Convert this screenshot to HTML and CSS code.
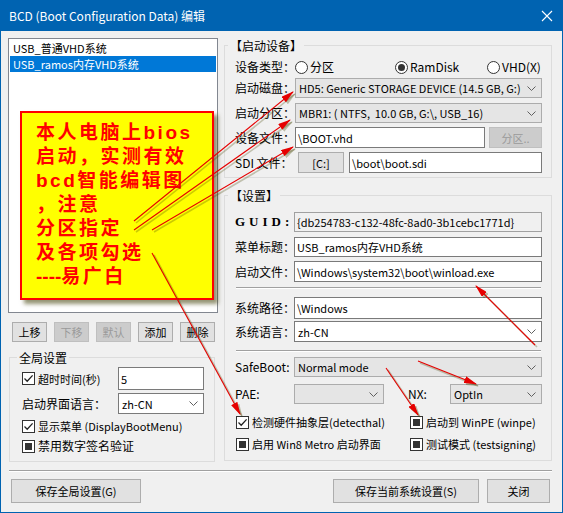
FILE: index.html
```html
<!DOCTYPE html>
<html lang="zh-CN">
<head>
<meta charset="utf-8">
<title>BCD 编辑</title>
<link rel="stylesheet" href="styles.css">
</head>
<body>
<div class="window">
  <div class="titlebar">
    <span class="title">BCD (Boot Configuration Data) 编辑</span>
    <svg class="close" width="12" height="12" viewBox="0 0 12 12"><path d="M1 1L11 11M11 1L1 11" stroke="#fff" stroke-width="1.1"/></svg>
  </div>
  <div class="content">
    <div class="main">
      <div class="left">
        <div class="listbox">
          <div class="item">USB_普通VHD系统</div>
          <div class="item selected">USB_ramos内存VHD系统</div>
        </div>
        <div class="btnrow">
          <div class="btn sm">上移</div>
          <div class="btn sm disabled">下移</div>
          <div class="btn sm disabled">默认</div>
          <div class="btn sm">添加</div>
          <div class="btn sm">删除</div>
        </div>
        <div class="group global">
          <div class="legend gl">全局设置</div>
          <div class="grow r1">
            <div class="chk"><span class="cb"><svg viewBox="0 0 11 11"><path d="M1.5 5.5L4.2 8.2L9.6 2.4" fill="none" stroke="#222" stroke-width="1.3"/></svg></span>超时时间(秒)</div>
            <div class="input gfield">5</div>
          </div>
          <div class="grow r2">
            <div class="glbl">启动界面语言：</div>
            <div class="combo white gfield"><span>zh-CN</span><svg class="chev" width="9" height="5" viewBox="0 0 9 5"><path d="M0.5 0.5L4.5 4.5L8.5 0.5" fill="none" stroke="#606060"/></svg></div>
          </div>
          <div class="grow r3">
            <div class="chk"><span class="cb"><svg viewBox="0 0 11 11"><path d="M1.5 5.5L4.2 8.2L9.6 2.4" fill="none" stroke="#222" stroke-width="1.3"/></svg></span>显示菜单 (DisplayBootMenu)</div>
          </div>
          <div class="grow r4">
            <div class="chk glbl"><span class="cb ind"></span>禁用数字签名验证</div>
          </div>
        </div>
      </div>

      <div class="right">
        <div class="group dev">
          <div class="legend rl">【启动设备】</div>
          <div class="row radios">
            <div class="lbl">设备类型：</div>
            <div class="radio w1"><span class="rb"></span>分区</div>
            <div class="radio w2"><span class="rb on"></span>RamDisk</div>
            <div class="radio"><span class="rb"></span>VHD(X)</div>
          </div>
          <div class="row h20 m1">
            <div class="lbl">启动磁盘：</div>
            <div class="combo gray fill"><span>HD5: Generic STORAGE DEVICE (14.5 GB, G:)</span><svg class="chev" width="9" height="5" viewBox="0 0 9 5"><path d="M0.5 0.5L4.5 4.5L8.5 0.5" fill="none" stroke="#606060"/></svg></div>
          </div>
          <div class="row h20 m5">
            <div class="lbl">启动分区：</div>
            <div class="combo gray fill"><span>MBR1: ( NTFS,&nbsp; 10.0 GB, G:\, USB_16)</span><svg class="chev" width="9" height="5" viewBox="0 0 9 5"><path d="M0.5 0.5L4.5 4.5L8.5 0.5" fill="none" stroke="#606060"/></svg></div>
          </div>
          <div class="row h21 m4">
            <div class="lbl">设备文件：</div>
            <div class="input filew">\BOOT.vhd</div>
            <div class="btn disabled partbtn">分区..</div>
          </div>
          <div class="row h21 m4">
            <div class="lbl sdi">SDI 文件：</div>
            <div class="btn cbtn">[C:]</div>
            <div class="input fill sdifield">\boot\boot.sdi</div>
          </div>
        </div>

        <div class="group set">
          <div class="legend rl">【设置】</div>
          <div class="row h20 m8">
            <div class="lbl2 guid">GUID:</div>
            <div class="input ro fill">{db254783-c132-48fc-8ad0-3b1cebc1771d}</div>
          </div>
          <div class="row h20 m5">
            <div class="lbl2">菜单标题：</div>
            <div class="input fill">USB_ramos内存VHD系统</div>
          </div>
          <div class="row h21 m4">
            <div class="lbl2">启动文件：</div>
            <div class="input fill">\Windows\system32\boot\winload.exe</div>
          </div>
          <div class="hsep s1"></div>
          <div class="row h22 m9b">
            <div class="lbl2">系统路径：</div>
            <div class="input fill">\Windows</div>
          </div>
          <div class="row h21 m2">
            <div class="lbl2">系统语言：</div>
            <div class="combo white fill"><span>zh-CN</span><svg class="chev" width="9" height="5" viewBox="0 0 9 5"><path d="M0.5 0.5L4.5 4.5L8.5 0.5" fill="none" stroke="#606060"/></svg></div>
          </div>
          <div class="hsep s2"></div>
          <div class="row h20 m5">
            <div class="lbl2">SafeBoot:</div>
            <div class="combo gray fill"><span>Normal mode</span><svg class="chev" width="9" height="5" viewBox="0 0 9 5"><path d="M0.5 0.5L4.5 4.5L8.5 0.5" fill="none" stroke="#606060"/></svg></div>
          </div>
          <div class="row h20 m7">
            <div class="lbl2">PAE:</div>
            <div class="combo gray pae"><span></span><svg class="chev" width="9" height="5" viewBox="0 0 9 5"><path d="M0.5 0.5L4.5 4.5L8.5 0.5" fill="none" stroke="#606060"/></svg></div>
            <div class="nxl">NX:</div>
            <div class="combo gray fill"><span>OptIn</span><svg class="chev" width="9" height="5" viewBox="0 0 9 5"><path d="M0.5 0.5L4.5 4.5L8.5 0.5" fill="none" stroke="#606060"/></svg></div>
          </div>
          <div class="row h16 m10 chkrow">
            <div class="chk c1"><span class="cb"><svg viewBox="0 0 11 11"><path d="M1.5 5.5L4.2 8.2L9.6 2.4" fill="none" stroke="#222" stroke-width="1.3"/></svg></span>检测硬件抽象层(detecthal)</div>
            <div class="chk"><span class="cb ind"></span>启动到 WinPE (winpe)</div>
          </div>
          <div class="row h16 m6 chkrow">
            <div class="chk c1"><span class="cb ind"></span>启用 Win8 Metro 启动界面</div>
            <div class="chk"><span class="cb ind"></span>测试模式 (testsigning)</div>
          </div>
        </div>
      </div>
    </div>

    <div class="hsep foot"></div>
    <div class="footer">
      <div class="btn fb1">保存全局设置(G)</div>
      <div class="fright">
        <div class="btn fb2">保存当前系统设置(S)</div>
        <div class="btn fb3">关闭</div>
      </div>
    </div>
  </div>

  <div class="callout">本人电脑上bios<br>启动，实测有效<br>bcd智能编辑图<br>，注意<br>分区指定<br>及各项勾选<br><span class="dash">----</span>易广白</div>

  <svg class="arrows" width="563" height="513" viewBox="0 0 563 513">
    <defs>
      <marker id="ah" markerWidth="13" markerHeight="7" refX="12" refY="3.5" orient="auto" markerUnits="userSpaceOnUse">
        <path d="M0,0 L13,3.5 L0,7 z" fill="#e60000"/>
      </marker>
      <marker id="ahs" markerWidth="13" markerHeight="7" refX="12" refY="3.5" orient="auto" markerUnits="userSpaceOnUse">
        <path d="M0,0 L13,3.5 L0,7 z" fill="rgba(70,70,0,0.3)"/>
      </marker>
    </defs>
    <g class="shadow" transform="translate(2,2)">
      <line x1="134" y1="221" x2="293" y2="92" marker-end="url(#ahs)"/>
      <line x1="134" y1="230" x2="290" y2="120" marker-end="url(#ahs)"/>
      <line x1="152" y1="230" x2="293" y2="147" marker-end="url(#ahs)"/>
      <line x1="152" y1="253" x2="240" y2="414" marker-end="url(#ahs)"/>
      <line x1="535" y1="345" x2="476" y2="286" marker-end="url(#ahs)"/>
      <line x1="418" y1="361" x2="476" y2="384" marker-end="url(#ahs)"/>
      <line x1="386" y1="368" x2="418" y2="415" marker-end="url(#ahs)"/>
    </g>
    <g class="red">
      <line x1="134" y1="221" x2="293" y2="92" marker-end="url(#ah)"/>
      <line x1="134" y1="230" x2="290" y2="120" marker-end="url(#ah)"/>
      <line x1="152" y1="230" x2="293" y2="147" marker-end="url(#ah)"/>
      <line x1="152" y1="253" x2="240" y2="414" marker-end="url(#ah)"/>
      <line x1="535" y1="345" x2="476" y2="286" marker-end="url(#ah)"/>
      <line x1="418" y1="361" x2="476" y2="384" marker-end="url(#ah)"/>
      <line x1="386" y1="368" x2="418" y2="415" marker-end="url(#ah)"/>
    </g>
  </svg>
</div>
</body>
</html>
```

FILE: styles.css
```css
* { box-sizing: border-box; margin: 0; padding: 0; }

body {
  margin: 0;
  background: #ffffff;
  font-family: "Noto Sans CJK SC", "Noto Sans", sans-serif;
  font-size: 11px;
  line-height: 16px;
  color: #000;
}

.window {
  position: relative;
  width: 563px;
  height: 513px;
  background: #0063b1;
  padding: 0 1px 1px 1px;
  display: flex;
  flex-direction: column;
}

.titlebar {
  height: 31px;
  flex: none;
  display: flex;
  align-items: center;
  justify-content: space-between;
  padding: 0 9px 0 8px;
  color: #fff;
}
.title { font-size: 12px; line-height: 16px; }
.close { display: block; margin-top: 1px; }

.content {
  flex: 1;
  background: #f0f0f0;
  padding: 7px 10px 0 7px;
  display: flex;
  flex-direction: column;
}

.main { display: flex; gap: 6px; }

.left { width: 210px; flex: none; display: flex; flex-direction: column; }
.right { width: 328px; flex: none; display: flex; flex-direction: column; }

.listbox {
  height: 275px;
  background: #fff;
  border: 1px solid #828790;
  padding: 1px;
}
.item { height: 16px; line-height: 16px; padding-left: 3px; white-space: nowrap; }
.item.selected { background: #0078d7; color: #fff; }

.btnrow { display: flex; gap: 7px; margin-top: 9px; padding-left: 4px; }

.btn {
  background: #e1e1e1;
  border: 1px solid #adadad;
  display: flex;
  align-items: center;
  justify-content: center;
  white-space: nowrap;
}
.btn.sm { width: 35px; height: 20px; }
.btn.disabled { background: #cccccc; border-color: #bfbfbf; color: #9a9a9a; }

.group { border: 1px solid #dcdcdc; }
.legend {
  width: fit-content;
  height: 16px;
  line-height: 16px;
  margin-top: -8px;
  background: #f0f0f0;
  white-space: nowrap;
}
.legend.gl { margin-left: -5px; padding: 0 2px; font-size: 12px; }
.legend.rl { margin-left: -7px; padding: 0 2px; font-size: 12px; }

.global {
  margin-top: 15px;
  margin-left: 1px;
  width: 206px;
  padding: 0 10px 7px 12px;
}
.grow { display: flex; align-items: center; justify-content: space-between; }
.r1 { height: 23px; margin-top: 1px; }
.r2 { height: 21px; margin-top: 3px; }
.r3 { height: 16px; margin-top: 4px; }
.r4 { height: 16px; margin-top: 4px; }
.gfield { width: 86px; height: 100%; }
.glbl { font-size: 12px; }

.chk { display: flex; align-items: center; white-space: nowrap; }
.cb {
  width: 13px;
  height: 13px;
  border: 1px solid #333;
  background: #fff;
  display: inline-flex;
  align-items: center;
  justify-content: center;
  flex: none;
  margin-right: 3px;
}
.cb svg { width: 11px; height: 11px; display: block; }
.cb.ind::after { content: ""; width: 7px; height: 7px; background: #333; }

.input {
  background: #fff;
  border: 1px solid #7a7a7a;
  padding-left: 2px;
  display: flex;
  align-items: center;
  white-space: nowrap;
  overflow: hidden;
}
.input.ro { background: #f0f0f0; border-color: #a0a0a0; }

.combo {
  border: 1px solid #adadad;
  display: flex;
  align-items: center;
  justify-content: space-between;
  padding: 0 5px 0 3px;
  white-space: nowrap;
  overflow: hidden;
}
.combo.gray { background: #e5e5e5; border-color: #acacac; }
.combo.white { background: #fff; border-color: #7a7a7a; }
.chev { display: block; flex: none; }

.dev { margin-top: 7px; padding: 0 9px 4px 10px; }
.set { margin-top: 17px; padding: 0 9px 8px 10px; }

.row { display: flex; align-items: center; }
.row > .fill { flex: 1; height: 100%; }
.lbl { width: 60px; flex: none; white-space: nowrap; font-size: 12px; }
.lbl2 { width: 59px; flex: none; white-space: nowrap; font-size: 12px; }
.lbl.sdi { width: 63px; }

.radios { height: 20px; margin-top: 3px; }
.radio { display: flex; align-items: center; white-space: nowrap; font-size: 12px; }
.radio.w1 { width: 100px; }
.radio.w2 { width: 92px; }
.rb {
  width: 13px;
  height: 13px;
  border: 1px solid #333;
  border-radius: 50%;
  background: #fff;
  display: inline-flex;
  align-items: center;
  justify-content: center;
  margin-right: 2px;
  flex: none;
}
.rb.on::after { content: ""; width: 7px; height: 7px; border-radius: 50%; background: #333; }

.h16 { height: 16px; }
.h20 { height: 20px; }
.h21 { height: 21px; }
.h22 { height: 22px; }
.m1 { margin-top: 1px; }
.m2 { margin-top: 2px; }
.m4 { margin-top: 4px; }
.m5 { margin-top: 5px; }
.m6 { margin-top: 6px; }
.m7 { margin-top: 7px; }
.m8 { margin-top: 8px; }
.m9b { margin-top: 8px; }
.m10 { margin-top: 10px; }

.filew { width: 190px; height: 100%; }
.partbtn { width: 53px; height: 100%; margin-left: 4px; }
.cbtn { width: 46px; height: 100%; }
.sdifield { margin-left: 5px; }

.guid {
  font-family: "Liberation Serif", serif;
  font-weight: bold;
  font-size: 13px;
  letter-spacing: 4px;
}

.hsep {
  height: 2px;
  border-top: 1px solid #a0a0a0;
  border-bottom: 1px solid #ffffff;
}
.hsep.s1 { margin: 5px 1px 0 1px; }
.hsep.s2 { margin: 8px 1px 0 1px; }
.hsep.foot { margin: 8px 0 0 1px; }

.pae { width: 90px; height: 100%; }
.nxl { width: 42px; margin-left: 24px; flex: none; font-size: 12px; }

.chkrow .c1 { width: 174px; margin-left: 1px; }

.footer {
  display: flex;
  justify-content: space-between;
  margin-top: 7px;
}
.footer .btn { height: 24px; }
.fb1 { width: 130px; margin-left: 3px; }
.fright { display: flex; gap: 8px; margin-right: 2px; }
.fb2 { width: 146px; }
.fb3 { width: 63px; }

.callout {
  position: absolute;
  left: 20px;
  top: 111px;
  width: 194px;
  height: 189px;
  background: #ffff00;
  border: 2px solid #ff0000;
  box-shadow: 4px 4px 4px rgba(60, 60, 0, 0.55);
  padding: 8px 0 0 14px;
  color: #ff0000;
  font-family: "Liberation Sans", "Noto Sans CJK SC", sans-serif;
  font-weight: bold;
  font-size: 19px;
  line-height: 24px;
  letter-spacing: 2.5px;
  white-space: nowrap;
}
.callout .dash { letter-spacing: 0; }

.arrows {
  position: absolute;
  left: 0;
  top: 0;
  pointer-events: none;
}
.arrows .shadow line { stroke: rgba(70, 70, 0, 0.28); stroke-width: 1.6; }
.arrows .red line { stroke: #e60000; stroke-width: 1.1; }
```
